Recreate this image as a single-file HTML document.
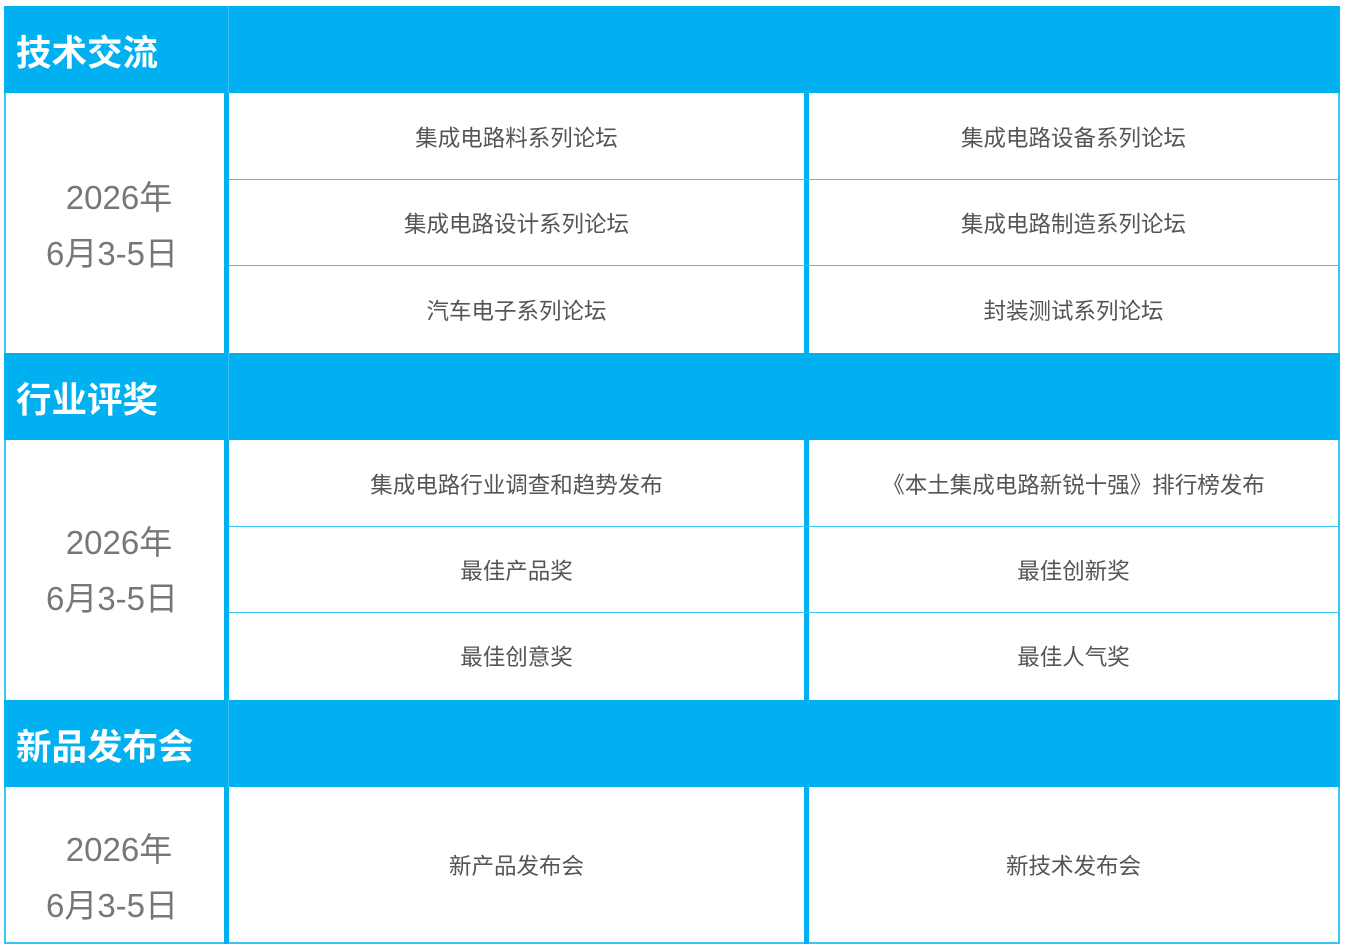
<!DOCTYPE html>
<html><head><meta charset="utf-8"><style>
body{margin:0;width:1346px;height:950px;background:#fff;position:relative;overflow:hidden;font-family:"Liberation Sans","Noto Sans CJK SC",sans-serif}
div{position:absolute;box-sizing:border-box}
.band{left:4px;width:1336px;height:87px;background:#00b0f0}
.band span{position:absolute;left:12px;top:2px;line-height:90px;color:#fff;font-weight:bold;font-size:35.5px}
.band i{position:absolute;left:224px;top:0;width:1px;height:100%;background:#3cc3f5}
.vl{width:5px;background:#00b0f0}
.hl{height:1px;background:#3cc3f5}
.cell{height:86px;display:flex;align-items:center;justify-content:center;color:#555;font-size:22.5px}
.date{left:3px;width:218px;color:#777;font-size:33px;text-align:center;line-height:56px}
</style></head><body>
<div style="left:4px;top:6px;width:1336px;height:938px;border:2px solid #3cc3f5;border-top:none"></div>

<div class="band" style="top:6px"><span>技术交流</span><i></i></div>
<div class="band" style="top:353px"><span>行业评奖</span><i></i></div>
<div class="band" style="top:700px"><span>新品发布会</span><i></i></div>

<div class="vl" style="left:224px;top:93px;height:260px"></div>
<div class="vl" style="left:804px;top:93px;height:260px"></div>
<div class="vl" style="left:224px;top:440px;height:260px"></div>
<div class="vl" style="left:804px;top:440px;height:260px"></div>
<div class="vl" style="left:224px;top:787px;height:157px"></div>
<div class="vl" style="left:804px;top:787px;height:157px"></div>

<div class="hl" style="left:229px;width:1110px;top:179px"></div>
<div class="hl" style="left:229px;width:1110px;top:265px"></div>
<div class="hl" style="left:229px;width:1110px;top:526px"></div>
<div class="hl" style="left:229px;width:1110px;top:612px"></div>

<div class="date" style="top:170px"><span style="margin-left:14px">2026年</span><br>6月3-5日</div>
<div class="date" style="top:515px"><span style="margin-left:14px">2026年</span><br>6月3-5日</div>
<div class="date" style="top:822px"><span style="margin-left:14px">2026年</span><br>6月3-5日</div>

<div class="cell" style="left:229px;width:575px;top:94px">集成电路料系列论坛</div>
<div class="cell" style="left:809px;width:529px;top:94px">集成电路设备系列论坛</div>
<div class="cell" style="left:229px;width:575px;top:180px">集成电路设计系列论坛</div>
<div class="cell" style="left:809px;width:529px;top:180px">集成电路制造系列论坛</div>
<div class="cell" style="left:229px;width:575px;top:267px">汽车电子系列论坛</div>
<div class="cell" style="left:809px;width:529px;top:267px">封装测试系列论坛</div>

<div class="cell" style="left:229px;width:575px;top:441px">集成电路行业调查和趋势发布</div>
<div class="cell" style="left:809px;width:529px;top:441px">《本土集成电路新锐十强》排行榜发布</div>
<div class="cell" style="left:229px;width:575px;top:527px">最佳产品奖</div>
<div class="cell" style="left:809px;width:529px;top:527px">最佳创新奖</div>
<div class="cell" style="left:229px;width:575px;top:613px">最佳创意奖</div>
<div class="cell" style="left:809px;width:529px;top:613px">最佳人气奖</div>

<div class="cell" style="left:229px;width:575px;top:822px">新产品发布会</div>
<div class="cell" style="left:809px;width:529px;top:822px">新技术发布会</div>
</body></html>
